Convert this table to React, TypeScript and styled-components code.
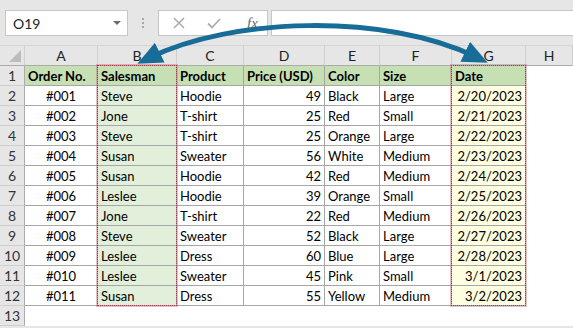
import React from 'react';
import styled, { createGlobalStyle } from 'styled-components';

const GlobalStyle = createGlobalStyle`
  html, body {
    margin: 0;
    padding: 0;
    background: #fff;
    overflow: hidden;
  }
  * {
    box-sizing: border-box;
  }
`;

// column widths, row header first (each includes its 1px right line)
const COLS = [25, 73, 79, 67, 81, 55, 72, 74];
const LETTERS = ['A', 'B', 'C', 'D', 'E', 'F', 'G', 'H'];
const TOOLBAR_H = 46;
const ROW_H = 20;

type Align = 'left' | 'right' | 'center';

const COL_ALIGN: Align[] = ['center', 'left', 'left', 'right', 'left', 'left', 'right'];

const HEADERS = ['Order No.', 'Salesman', 'Product', 'Price (USD)', 'Color', 'Size', 'Date'];

const ROWS: string[][] = [
  ['#001', 'Steve', 'Hoodie', '49', 'Black', 'Large', '2/20/2023'],
  ['#002', 'Jone', 'T-shirt', '25', 'Red', 'Small', '2/21/2023'],
  ['#003', 'Steve', 'T-shirt', '25', 'Orange', 'Large', '2/22/2023'],
  ['#004', 'Susan', 'Sweater', '56', 'White', 'Medium', '2/23/2023'],
  ['#005', 'Susan', 'Hoodie', '42', 'Red', 'Medium', '2/24/2023'],
  ['#006', 'Leslee', 'Hoodie', '39', 'Orange', 'Small', '2/25/2023'],
  ['#007', 'Jone', 'T-shirt', '22', 'Red', 'Medium', '2/26/2023'],
  ['#008', 'Steve', 'Sweater', '52', 'Black', 'Large', '2/27/2023'],
  ['#009', 'Leslee', 'Dress', '60', 'Blue', 'Large', '2/28/2023'],
  ['#010', 'Leslee', 'Sweater', '45', 'Pink', 'Small', '3/1/2023'],
  ['#011', 'Susan', 'Dress', '55', 'Yellow', 'Medium', '3/2/2023'],
];

const colLeft = (i: number) => COLS.slice(0, i + 1).reduce((a, b) => a + b, 0);

const App: React.FC = () => {
  const bodyFill = (col: number) => (col === 1 ? '#E2EFDA' : col === 6 ? '#FFFFE1' : '#fff');

  return (
    <Page>
      <GlobalStyle />
      <Toolbar>
        <NameBox>
          <span>O19</span>
          <Caret />
        </NameBox>
        <Grip>
          <i />
          <i />
          <i />
        </Grip>
        <FxGroup>
          <svg width="14" height="14" viewBox="0 0 14 14">
            <path d="M2 2 L12 12 M12 2 L2 12" stroke="#ADADAD" strokeWidth="1.6" fill="none" />
          </svg>
          <svg width="16" height="14" viewBox="0 0 16 14">
            <path d="M2 7.5 L6 11.5 L14 3" stroke="#ADADAD" strokeWidth="1.8" fill="none" />
          </svg>
          <FxLabel>fx</FxLabel>
        </FxGroup>
        <FormulaInput />
      </Toolbar>

      <Sheet>
        <Corner>
          <svg width="25" height="19" viewBox="0 0 25 19">
            <polygon points="21,4 21,16 9,16" fill="#BDBDBD" />
          </svg>
        </Corner>
        {LETTERS.map((l) => (
          <ColHead key={l}>{l}</ColHead>
        ))}

        <RowHead>1</RowHead>
        {HEADERS.map((h) => (
          <Cell key={h} $align="left" $bold $fill="#C6E0B4" $lined>
            {h}
          </Cell>
        ))}
        <Cell $align="left" $fill="#fff" />

        {ROWS.map((row, r) => (
          <React.Fragment key={r}>
            <RowHead>{r + 2}</RowHead>
            {row.map((v, c) => (
              <Cell key={c} $align={COL_ALIGN[c]} $fill={bodyFill(c)} $lined>
                {v}
              </Cell>
            ))}
            <Cell $align="left" $fill="#fff" />
          </React.Fragment>
        ))}

        <RowHead>13</RowHead>
        {LETTERS.map((l) => (
          <Cell key={l} $align="left" $fill="#fff" />
        ))}
      </Sheet>

      {[1, 6].map((c) => (
        <Marquee
          key={c}
          $left={colLeft(c) - 1}
          $top={TOOLBAR_H + ROW_H - 1}
          $width={COLS[c + 1] + 1}
          $height={ROW_H * 12 + 1}
        />
      ))}

      <ArrowLayer width="573" height="328" viewBox="0 0 573 328">
        <defs>
          <marker
            id="head"
            markerUnits="userSpaceOnUse"
            markerWidth="26"
            markerHeight="24"
            refX="12"
            refY="12"
            orient="auto-start-reverse"
          >
            <path d="M0 1 L25 12 L0 23 Z" fill="#186C98" />
          </marker>
        </defs>
        <path
          d="M149 58 C232 17 385 13 476 57"
          stroke="#186C98"
          strokeWidth="5"
          fill="none"
          markerStart="url(#head)"
          markerEnd="url(#head)"
        />
      </ArrowLayer>
    </Page>
  );
};

const Page = styled.div`
  position: relative;
  width: 573px;
  height: 328px;
  overflow: hidden;
  background: #e6e6e6;
  font-family: Lato, 'Open Sans', sans-serif;
`;

const Toolbar = styled.div`
  height: ${TOOLBAR_H}px;
  display: flex;
  align-items: flex-start;
  padding: 10px 0 0 5px;
  background: #e6e6e6;
  border-bottom: 1px solid #d5d5d5;
`;

const NameBox = styled.div`
  width: 123px;
  height: 26px;
  display: flex;
  align-items: center;
  justify-content: space-between;
  padding: 0 6px 0 7px;
  background: #fff;
  border: 1px solid #c6c6c6;
  font-size: 14px;
  color: #222;
`;

const Caret = styled.span`
  width: 0;
  height: 0;
  border-left: 4px solid transparent;
  border-right: 4px solid transparent;
  border-top: 4px solid #6b6b6b;
`;

const Grip = styled.div`
  width: 30px;
  height: 26px;
  display: flex;
  flex-direction: column;
  align-items: center;
  justify-content: center;
  gap: 2px;

  i {
    width: 2px;
    height: 2px;
    background: #a8a8a8;
  }
`;

const FxGroup = styled.div`
  width: 110px;
  height: 26px;
  display: flex;
  align-items: center;
  gap: 20px;
  padding-left: 13px;
  background: #fff;
  border: 1px solid #c6c6c6;
`;

const FxLabel = styled.span`
  font-family: 'Liberation Serif', serif;
  font-style: italic;
  font-size: 15px;
  color: #6a6a6a;
  margin-left: 5px;
`;

const FormulaInput = styled.div`
  flex: 1;
  height: 26px;
  margin-left: 3px;
  background: #fff;
  border: 1px solid #c6c6c6;
  border-right: none;
`;

const Sheet = styled.div`
  display: grid;
  grid-template-columns: ${COLS.map((w) => `${w}px`).join(' ')} 1fr;
  grid-auto-rows: ${ROW_H}px;
  background: #fff;
`;

const Corner = styled.div`
  background: #e6e6e6;
  border-right: 1px solid #cfcfcf;
  border-bottom: 1px solid #ababab;
`;

const ColHead = styled.div`
  display: flex;
  align-items: center;
  justify-content: center;
  background: #e6e6e6;
  border-right: 1px solid #cfcfcf;
  border-bottom: 1px solid #ababab;
  font-size: 14px;
  color: #222;
`;

const RowHead = styled.div`
  display: flex;
  align-items: center;
  justify-content: center;
  background: #e6e6e6;
  border-right: 1px solid #ababab;
  border-bottom: 1px solid #cfcfcf;
  font-size: 14px;
  color: #333;
`;

const Cell = styled.div<{ $align: Align; $bold?: boolean; $fill: string; $lined?: boolean }>`
  display: flex;
  align-items: center;
  justify-content: ${({ $align }) =>
    $align === 'right' ? 'flex-end' : $align === 'center' ? 'center' : 'flex-start'};
  padding: 1px 3px 0 3px;
  background: ${({ $fill }) => $fill};
  border-right: 1px solid ${({ $lined }) => ($lined ? '#a6a6a6' : 'transparent')};
  border-bottom: 1px solid ${({ $lined }) => ($lined ? '#a6a6a6' : 'transparent')};
  font-size: 13px;
  font-weight: ${({ $bold }) => ($bold ? 700 : 400)};
  color: #000;
  white-space: nowrap;
  overflow: hidden;
`;

const Marquee = styled.div<{ $left: number; $top: number; $width: number; $height: number }>`
  position: absolute;
  left: ${({ $left }) => $left}px;
  top: ${({ $top }) => $top}px;
  width: ${({ $width }) => $width}px;
  height: ${({ $height }) => $height}px;
  border: 1px dotted #b0324a;
  box-shadow: 0 0 0 1px rgba(200, 110, 130, 0.45);
  pointer-events: none;
`;

const ArrowLayer = styled.svg`
  position: absolute;
  left: 0;
  top: 0;
  pointer-events: none;
`;

export default App;
